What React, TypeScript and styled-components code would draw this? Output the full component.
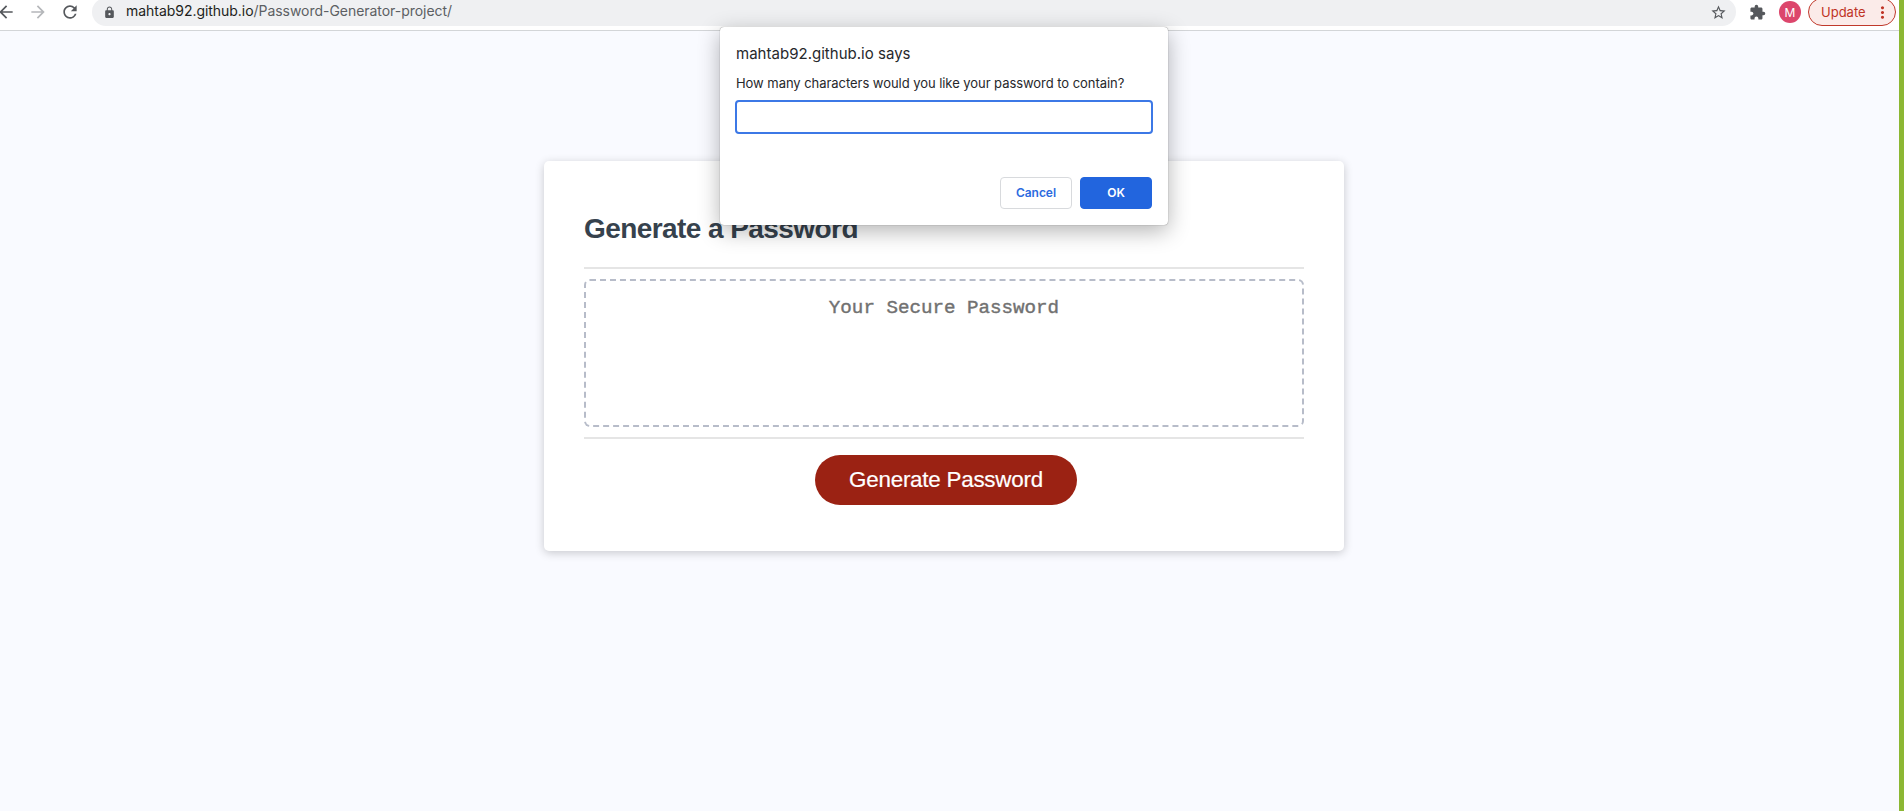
import React from "react";
import styled, { createGlobalStyle } from "styled-components";
import {
  MdArrowBack,
  MdArrowForward,
  MdExtension,
  MdLock,
  MdMoreVert,
  MdRefresh,
  MdStarBorder,
} from "react-icons/md";

const uiFont = `Inter, Roboto, sans-serif`;
const pageFont = `"Liberation Sans", Arial, sans-serif`;

const GlobalStyle = createGlobalStyle`
  *, *::before, *::after { box-sizing: border-box; }
  body { margin: 0; overflow: hidden; }
`;

const Screen = styled.div`
  position: relative;
  height: 100vh;
  display: flex;
  flex-direction: column;
  border-right: 5px solid #8cb733;
  background: #f9faff;
  font-family: ${pageFont};
  overflow: hidden;
`;

const Toolbar = styled.header`
  flex: none;
  height: 31px;
  display: flex;
  align-items: flex-start;
  background: #fff;
  border-bottom: 1px solid #d3d5d8;
  font-family: ${uiFont};
`;

const NavButtons = styled.nav`
  width: 92px;
  height: 24px;
  display: flex;
  align-items: center;
  gap: 12px;
  margin-left: -4px;
  margin-right: 4px;
`;

const NavIcon = styled.span<{ $muted?: boolean }>`
  flex: none;
  display: flex;
  color: ${(p) => (p.$muted ? "#b5b7ba" : "#55585c")};
`;

const AddressBar = styled.div`
  width: 1644px;
  height: 28px;
  margin: -2px 0 0 0;
  padding: 0 9px 0 11px;
  display: flex;
  align-items: center;
  border-radius: 14px;
  background: #eff0f2;
  color: #55585c;
`;

const Url = styled.span`
  flex: 1;
  margin-left: 10px;
  font-size: 14px;
  line-height: 26px;
  padding-bottom: 2px;
  letter-spacing: -0.04px;
  color: #5c5f63;
  white-space: nowrap;

  b {
    font-weight: 400;
    color: #1d1e20;
  }
`;

const ToolbarActions = styled.div`
  height: 24px;
  display: flex;
  align-items: center;
  padding-left: 13px;
  color: #55585c;
`;

const Avatar = styled.span`
  width: 22px;
  height: 22px;
  margin: 0 7px 0 13px;
  border-radius: 50%;
  display: flex;
  align-items: center;
  justify-content: center;
  background: #dc466c;
  color: #fff;
  font-size: 12px;
`;

const UpdateButton = styled.button`
  height: 28px;
  width: 88px;
  margin-top: 0;
  padding: 0 3px 0 12px;
  display: flex;
  align-items: center;
  justify-content: space-between;
  border: 1px solid #c0392b;
  border-radius: 14px;
  background: #fbebe9;
  color: #bf3325;
  font: 400 13px ${uiFont};
`;

const Page = styled.main`
  flex: 1;
  display: flex;
  flex-direction: column;
  align-items: center;
  padding: 130px 11px 0 0;
`;

const Card = styled.section`
  width: 800px;
  height: 390px;
  padding: 0 40px;
  display: flex;
  flex-direction: column;
  border-radius: 5px;
  background: #fff;
  box-shadow: rgba(0, 0, 0, 0.2) 0 2px 10px 0;
`;

const CardHeader = styled.div`
  height: 108px;
  padding-top: 52px;
  border-bottom: 2px solid #e5e5e5;
`;

const Heading = styled.h2`
  margin: 0;
  font-size: 28px;
  line-height: 32px;
  font-weight: 700;
  letter-spacing: -0.57px;
  color: #36424d;
  white-space: nowrap;
`;

const CardBody = styled.div`
  padding: 10px 0;
  height: 168px;
`;

const PasswordBox = styled.textarea`
  display: block;
  width: 100%;
  height: 148px;
  padding: 16px 15px 14px;
  resize: none;
  overflow: hidden;
  border: 2px dashed #b7bcc9;
  border-radius: 6px;
  background: #fff;
  font: 400 19.2px/23px "Liberation Mono", "Courier New", monospace;
  text-align: center;

  &::placeholder {
    color: #717171;
    -webkit-text-stroke: 0.4px #717171;
    opacity: 1;
  }
`;

const CardFooter = styled.div`
  display: flex;
  justify-content: center;
  padding: 16px 0 0 4px;
  border-top: 2px solid #e5e5e5;
`;

const GenerateButton = styled.button`
  width: 262px;
  height: 50px;
  padding: 0;
  border: 0;
  border-radius: 25px;
  background: #9b2213;
  color: #fff;
  font: 400 22.4px ${pageFont};
  letter-spacing: -0.24px;
  -webkit-text-stroke: 0.2px #fff;
`;

const Dialog = styled.div`
  position: absolute;
  top: 27px;
  left: 720px;
  width: 448px;
  height: 198px;
  padding: 17px 16px 16px;
  display: flex;
  flex-direction: column;
  border-radius: 4px;
  background: #fff;
  box-shadow: 0 0 1px rgba(0, 0, 0, 0.6), 0 6px 22px rgba(0, 0, 0, 0.3);
  font-family: ${uiFont};
  color: #26282b;
`;

const DialogTitle = styled.div`
  font-size: 15px;
  line-height: 20px;
  letter-spacing: 0.02px;
  white-space: nowrap;
`;

const DialogMessage = styled.label`
  margin-top: 9px;
  font-size: 13px;
  line-height: 20px;
  letter-spacing: -0.05px;
  white-space: nowrap;
`;

const DialogInput = styled.input`
  flex: none;
  width: 418px;
  height: 34px;
  margin: 7px 0 0 -1px;
  border: 2px solid #3c78e6;
  border-radius: 4px;
  background: #fff;
  outline: none;
`;

const DialogActions = styled.div`
  margin-top: auto;
  display: flex;
  justify-content: flex-end;
  gap: 8px;
`;

const DialogButton = styled.button<{ $primary?: boolean }>`
  width: 72px;
  height: 32px;
  padding: 0 0 2px;
  border: 1px solid ${(p) => (p.$primary ? "#2265de" : "#d8dadd")};
  border-radius: 4px;
  background: ${(p) => (p.$primary ? "#2265de" : "#fff")};
  color: ${(p) => (p.$primary ? "#fff" : "#2d6be0")};
  font: 600 12px ${uiFont};
  letter-spacing: -0.05px;
`;

export default function App() {
  return (
    <Screen>
      <GlobalStyle />
      <Toolbar>
        <NavButtons>
          <NavIcon><MdArrowBack size={20} /></NavIcon>
          <NavIcon $muted><MdArrowForward size={20} /></NavIcon>
          <NavIcon><MdRefresh size={20} /></NavIcon>
        </NavButtons>
        <AddressBar>
          <MdLock size={13} />
          <Url><b>mahtab92.github.io</b>/Password-Generator-project/</Url>
          <MdStarBorder size={17} />
        </AddressBar>
        <ToolbarActions>
          <MdExtension size={17} />
          <Avatar>M</Avatar>
          <UpdateButton>
            Update
            <MdMoreVert size={19} />
          </UpdateButton>
        </ToolbarActions>
      </Toolbar>

      <Page>
        <Card>
          <CardHeader>
            <Heading>Generate a Password</Heading>
          </CardHeader>
          <CardBody>
            <PasswordBox readOnly placeholder="Your Secure Password" />
          </CardBody>
          <CardFooter>
            <GenerateButton>Generate Password</GenerateButton>
          </CardFooter>
        </Card>
      </Page>

      <Dialog role="dialog">
        <DialogTitle>mahtab92.github.io says</DialogTitle>
        <DialogMessage htmlFor="length">
          How many characters would you like your password to contain?
        </DialogMessage>
        <DialogInput id="length" />
        <DialogActions>
          <DialogButton>Cancel</DialogButton>
          <DialogButton $primary>OK</DialogButton>
        </DialogActions>
      </Dialog>
    </Screen>
  );
}
